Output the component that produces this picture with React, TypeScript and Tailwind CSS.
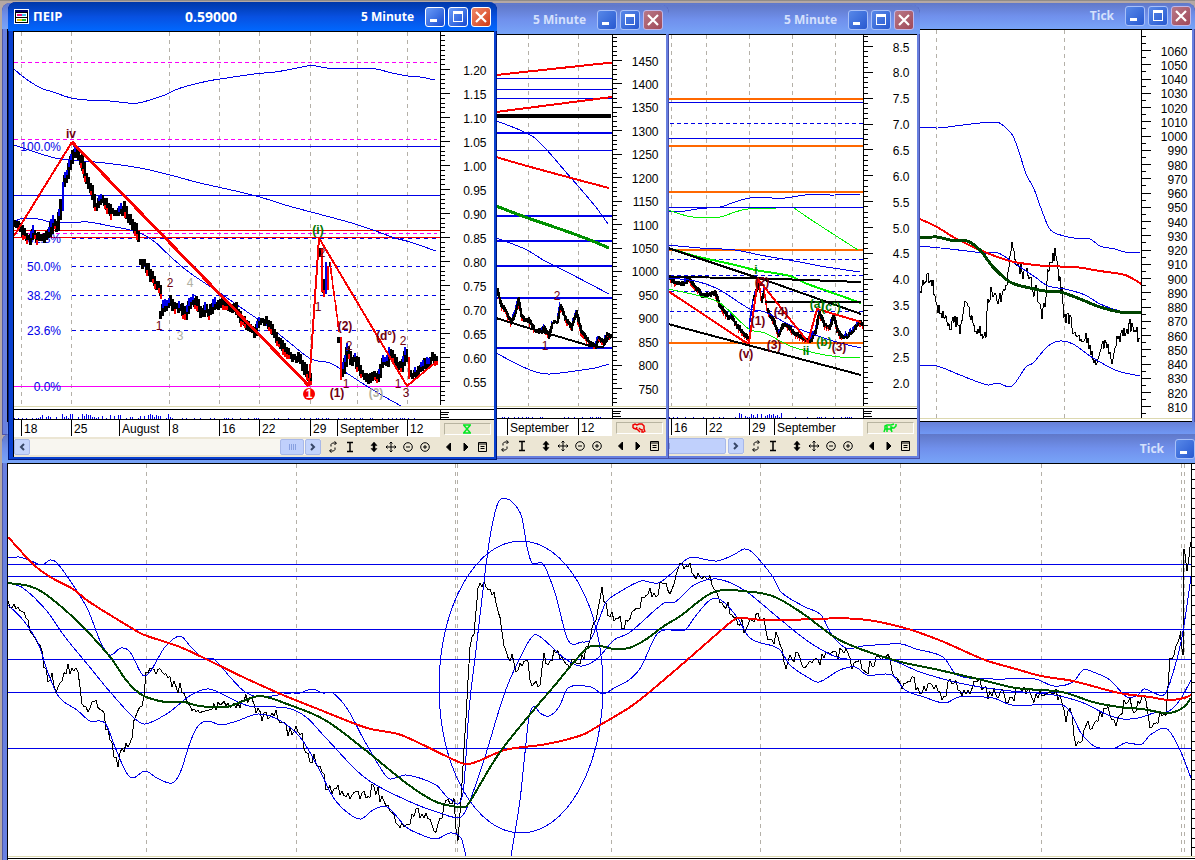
import type { ReactNode } from 'react'

type Point = [number, number]

const BLUE = '#0000e8'
const RED = '#f80000'
const ORANGE = '#ff6800'
const MAROON = '#700010'
const GREEN = '#007800'
const PINE = '#004400'

// "x,y x,y" -> [[x, y], ...]
const parse = (s: string): Point[] => s.trim().split(/\s+/).map((p) => p.split(',').map(Number) as Point)

const noise = (i: number) => {
  const n = Math.sin(i * 12.9898) * 43758.5453
  return n - Math.floor(n)
}

// height of the series at every whole x
const sample = (s: string) => {
  const pts = parse(s)
  const out: Point[] = []
  for (let i = 0; i < pts.length - 1; i++) {
    const [x0, y0] = pts[i]
    const [x1, y1] = pts[i + 1]
    for (let x = x0; x < x1; x++) out.push([x, y0 + ((y1 - y0) * (x - x0)) / (x1 - x0)])
  }
  out.push(pts[pts.length - 1])
  return out
}

// moving averages and bands
function Line({ d, color = BLUE, w = 1 }: { d: string; color?: string; w?: number }) {
  const p = parse(d)
  let path = `M${p[0][0]} ${p[0][1]}`
  for (let i = 0; i < p.length - 1; i++) {
    const a = p[i - 1] ?? p[i]
    const b = p[i]
    const c = p[i + 1]
    const e = p[i + 2] ?? c
    const third = (c[0] - b[0]) / 3
    const t1 = (c[1] - a[1]) / (c[0] - a[0])
    const t2 = (e[1] - b[1]) / (e[0] - b[0])
    path += `C${(b[0] + third).toFixed(1)} ${(b[1] + third * t1).toFixed(1)} ${(c[0] - third).toFixed(1)} ${(c[1] - third * t2).toFixed(1)} ${c[0]} ${c[1]}`
  }
  return <path d={path} fill="none" stroke={color} strokeWidth={w} />
}

// trend lines drawn by hand, corner to corner
function Trend({ d, color = RED, w = 2 }: { d: string; color?: string; w?: number }) {
  return <polyline points={d} fill="none" stroke={color} strokeWidth={w} strokeLinejoin="round" />
}

// tick by tick price
function TickLine({ d, amp = 5, every = 1 }: { d: string; amp?: number; every?: number }) {
  const pts = sample(d)
    .filter((_, i) => i % every === 0)
    .map(([x, y], i) => `${x},${(y + (noise(x + i) - 0.5) * 2 * amp).toFixed(1)}`)
  return <polyline points={pts.join(' ')} fill="none" stroke="#000" />
}

// high/low bars: black body, blue on the way up, red on the way down
function Bars({ d, amp = 5, wide = false }: { d: string; amp?: number; wide?: boolean }) {
  const pts = sample(d).filter((_, i) => !wide || i % 2 === 0)
  let black = ''
  let red = ''
  let blue = ''
  pts.forEach(([x, y], i) => {
    const prev = i ? pts[i - 1][1] : y
    const slope = (y - prev) / (wide ? 2 : 1)
    const j = (noise(x) - 0.5) * amp
    const a = amp * (0.6 + noise(x * 3) * 0.6)
    const top = Math.min(y, prev) + j - a
    const bottom = Math.max(y, prev) + j + a
    const seg = (from: number, to: number) => `M${x + 0.5} ${from.toFixed(1)}V${to.toFixed(1)}`
    if (Math.abs(slope) > 6) {
      if (slope > 0) red += seg(top, bottom)
      else blue += seg(top, bottom)
      return
    }
    black += seg(top, bottom)
    if (slope > 0.4 && noise(x * 7) > 0.5) red += seg(bottom - a * 0.5, bottom + a * 0.8)
    if (slope < -0.4 && noise(x * 5) > 0.45) blue += seg(top - a * 0.8, top + a)
  })
  return (
    <g fill="none">
      <path d={black} stroke="#000" strokeWidth={wide ? 3 : 2} />
      <path d={red} stroke={RED} strokeWidth={wide ? 2 : 1} />
      <path d={blue} stroke={BLUE} strokeWidth={wide ? 2 : 1} />
    </g>
  )
}

function Levels({ ys, x1, x2, color = BLUE, w = 1, dash }: { ys: number[]; x1: number; x2: number; color?: string; w?: number; dash?: string }) {
  return (
    <g stroke={color} strokeWidth={w} strokeDasharray={dash}>
      {ys.map((y) => (
        <line key={y} x1={x1} x2={x2} y1={y} y2={y} />
      ))}
    </g>
  )
}

function Grid({ xs, y1, y2 }: { xs: number[]; y1: number; y2: number }) {
  return (
    <g stroke="#b4b0a8" strokeDasharray="4 4">
      {xs.map((x) => (
        <line key={x} x1={x} x2={x} y1={y1} y2={y2} />
      ))}
    </g>
  )
}

interface AxisProps {
  x: number
  top: number
  bottom: number
  first: number
  step: number
  minor: number
  labels: string[]
}

function PriceAxis({ x, top, bottom, first, step, minor, labels }: AxisProps) {
  const gap = step / minor
  const start = first - Math.floor((first - top) / gap) * gap
  const small: number[] = []
  for (let y = start; y < bottom; y += gap) small.push(y)
  return (
    <g stroke="#000">
      <line x1={x} x2={x} y1={top} y2={bottom} />
      {small.map((y) => (
        <line key={y} x1={x} x2={x + 4} y1={y} y2={y} />
      ))}
      {labels.map((label, i) => (
        <g key={label}>
          <line x1={x} x2={x + 9} y1={first + i * step} y2={first + i * step} />
          <text x={x + 46} y={first + i * step + 5} textAnchor="end" stroke="none" fill="#000">
            {label}
          </text>
        </g>
      ))}
    </g>
  )
}

type Mark = [string, number, number, string, boolean?]

function Marks({ items }: { items: Mark[] }) {
  return (
    <g textAnchor="middle">
      {items.map(([text, x, y, color, bold], i) => (
        <text key={i} x={x} y={y} fill={color} fontWeight={bold ? 700 : 400}>
          {text}
        </text>
      ))}
    </g>
  )
}

function Chart({ box, className, children }: { box: string; className: string; children: ReactNode }) {
  return (
    <svg viewBox={box} preserveAspectRatio="none" shapeRendering="crispEdges" className={`block w-full bg-white text-[12px] ${className}`}>
      {children}
    </svg>
  )
}

const range = (from: number, to: number, step: number, digits = 0) => {
  const out: string[] = []
  const n = Math.round((to - from) / step)
  for (let i = 0; i <= n; i++) out.push((from + i * step).toFixed(digits))
  return out
}

/* ---------- window chrome ---------- */

function CaptionButton({ kind, active }: { kind: 'Minimize' | 'Maximize' | 'Close'; active: boolean }) {
  const blue = active ? 'bg-linear-to-br from-[#6c9cf8] to-[#1848d0] border-white' : 'bg-linear-to-br from-[#5888e8] to-[#2858d0] border-[#a8c0f8]'
  const red = active ? 'bg-linear-to-br from-[#f08868] to-[#d03810] border-white' : 'bg-linear-to-br from-[#b87888] to-[#a04858] border-[#c0b8e8]'
  return (
    <button aria-label={kind} className={`flex size-5 shrink-0 items-center justify-center rounded-[3px] border ${kind === 'Close' ? red : blue}`}>
      <svg width="14" height="14" viewBox="0 0 14 14" fill="none" stroke="#fff" shapeRendering={kind === 'Close' ? 'auto' : 'crispEdges'}>
        {kind === 'Minimize' && <path d="M2 10.5h7" strokeWidth="3" />}
        {kind === 'Maximize' && (
          <>
            <path d="M2.500 2v9.500h9V2" />
            <path d="M2 2.500h10" strokeWidth="3" />
          </>
        )}
        {kind === 'Close' && <path d="M2 2l10 10M12 2L2 12" strokeWidth="2.2" />}
      </svg>
    </button>
  )
}

interface WindowProps {
  className: string
  interval: string
  symbol?: string
  price?: string
  active?: boolean
  short?: boolean
  children: ReactNode
}

function Window({ className, interval, symbol, price, active = false, short, children }: WindowProps) {
  const frame = active ? 'bg-[#0840d0] shadow-[inset_1px_0_0_#001878,inset_-1px_-1px_0_#001878]' : 'bg-[#6880e0] shadow-[inset_1px_0_0_#5058a8,inset_-1px_-1px_0_#4850a8]'
  const bar = active
    ? 'bg-linear-to-b from-[#0038a8] via-[#0850e0] to-[#0068ff] text-white'
    : 'bg-linear-to-b from-[#6078c8] via-[#7090ec] to-[#78a4f8] text-[#d4e0fc]'
  return (
    <section className={`absolute flex flex-col overflow-hidden rounded-t-lg pr-[3px] pb-[3px] pl-[5px] ${frame} ${className}`}>
      <header
        className={`-mr-[3px] -ml-[5px] flex shrink-0 items-center gap-[3px] rounded-t-lg pl-[6px] font-['Open_Sans',sans-serif] text-[12px] font-bold ${bar} ${short ? 'h-[26px] pr-[4px]' : 'h-[29px] pr-[6px]'}`}
      >
        {symbol && (
          <div className="flex w-[168px] items-center gap-1">
            <svg width="15" height="15" viewBox="0 0 15 15" shapeRendering="crispEdges">
              <path d="M0 0h15v15H0z" fill="#fff" />
              <path d="M1 1h13v2H1z" fill="#000060" />
              <path d="M1 3h13v11H1z" fill="#000" />
              <path d="M2 4h11v4H2zM2 9h11v4H2z" fill="#fff" />
              <path d="M3 5h5v2H3z" fill="#f01080" />
              <path d="M8 5h4v2H8z" fill="#40c0f0" />
              <path d="M3 10h5v2H3z" fill="#e8c800" />
              <path d="M8 10h4v2H8z" fill="#20c020" />
            </svg>
            <span className="text-[13px]">{symbol}</span>
          </div>
        )}
        <span className="text-sm">{price}</span>
        <span className="mr-[8px] ml-auto">{interval}</span>
        <CaptionButton kind="Minimize" active={active} />
        <CaptionButton kind="Maximize" active={active} />
        <CaptionButton kind="Close" active={active} />
      </header>
      <div className="flex-1 border-t border-l border-black bg-white">{children}</div>
    </section>
  )
}

const toolIcons: [string, ReactNode][][] = [
  [
    ['Refresh', <path key="r" d="M9 2H5.500L4 3.500V5.500M7.500 .5L9.500 2L7.500 4M3 10H6.500L8 8.500V6.500M4.500 8L2.500 10L4.500 11.500" />],
    ['Cursor', <path key="c" d="M3 1.500h6M3 10.500h6M6 1.500v9" strokeWidth="1.500" />],
  ],
  [
    ['Scale', <path key="s" d="M6 1L9 4.500H7V7.500H9L6 11L3 7.500H5V4.500H3z" fill="#000" strokeWidth=".5" />],
    ['Move', <path key="m" d="M6 1v10M1 6h10M4.500 2.500L6 1L7.500 2.500M4.500 9.500L6 11L7.500 9.500M2.500 4.500L1 6L2.500 7.500M9.500 4.500L11 6L9.500 7.500" />],
    ['Zoom out', <path key="o" d="M10.300 6a4.300 4.300 0 1 1-8.600 0a4.300 4.300 0 1 1 8.600 0M4 6h4" />],
    ['Zoom in', <path key="i" d="M10.300 6a4.300 4.300 0 1 1-8.600 0a4.300 4.300 0 1 1 8.600 0M4 6h4M6 4v4" />],
  ],
  [
    ['Previous', <path key="p" d="M7.500 2v8L3.500 6z" fill="#000" />],
    ['Next', <path key="n" d="M4 2v8L8 6z" fill="#000" />],
    ['Properties', <path key="l" d="M1.500 1.500h8v9h-8zM1.500 3h8M3.500 5.500h4M3.500 7.500h4" />],
  ],
]

function Toolbar({ thumb, gap }: { thumb: string; gap: string }) {
  const arrow = 'flex h-4 w-4 shrink-0 items-center justify-center rounded-xs border border-[#a8b8e8] bg-[#c4d4fc]'
  return (
    <div className="flex h-5 items-center bg-[#ece6d4]">
      <div className="flex h-4 w-[307px] items-center bg-[#f8f6f0]">
        <button aria-label="Scroll left" className={arrow}>
          <svg width="8" height="8" fill="none" stroke="#384868" strokeWidth="2">
            <path d="M6 1L3 4L6 7" />
          </svg>
        </button>
        <div className={`ml-auto flex h-4 items-center justify-center gap-px rounded-xs border border-[#a8b8e8] bg-[#c0d0fc] ${thumb} ${gap}`}>
          <i className="h-1.5 w-px bg-[#88a0e0]" />
          <i className="h-1.5 w-px bg-[#88a0e0]" />
          <i className="h-1.5 w-px bg-[#88a0e0]" />
          <i className="h-1.5 w-px bg-[#88a0e0]" />
        </div>
        <button aria-label="Scroll right" className={arrow}>
          <svg width="8" height="8" fill="none" stroke="#384868" strokeWidth="2">
            <path d="M2 1L5 4L2 7" />
          </svg>
        </button>
      </div>
      <div className="ml-[3px] flex gap-[7px]">
        {toolIcons.map((group, i) => (
          <div key={i} className="flex">
            {group.map(([name, icon]) => (
              <button key={name} aria-label={name} className="flex h-5 w-[17px] items-center justify-center">
                <svg width="12" height="12" fill="none" stroke="#000">
                  {icon}
                </svg>
              </button>
            ))}
          </div>
        ))}
      </div>
    </div>
  )
}

interface FooterProps {
  lead: string
  dates: [string, string][]
  from: number
  bursts: number[]
  status: ReactNode
  thumb: string
  gap: string
}

// volume strip, date scale, status lamp and toolbar
function ChartFooter({ lead, dates, from, bursts, status, thumb, gap }: FooterProps) {
  let volume = ''
  for (let x = from; x < from + 422; x += 2) {
    const near = bursts.some((b) => Math.abs(b - x) < 22)
    const h = noise(x * 1.7) * (near ? 5 : 1.5)
    if (h > 1) volume += `M${x + 0.5} 9V${(9 - h).toFixed(1)}`
  }
  return (
    <>
      <div className="border-t border-black">
        <Chart box={`${from} 0 480 9`} className="h-[9px]">
          <path d={volume} stroke={BLUE} />
          <path d={`M${from + 426.5} 0v9M${from + 427} 2.500h8M${from + 427} 4.500h7M${from + 427} 7.500h8`} stroke="#000" />
        </Chart>
      </div>
      <div className="flex h-[18px] border-t border-black text-[12px] leading-[18px] text-black">
        <div className="flex flex-1 overflow-hidden">
          <div className={`shrink-0 ${lead}`} />
          {dates.map(([label, width]) => (
            <span key={label} className={`h-4 shrink-0 border-l border-black pl-[2px] ${width}`}>
              {label}
            </span>
          ))}
        </div>
        <div className="flex w-[54px] items-center justify-center bg-[#ece6d4]">
          <div className="flex h-[12px] w-[47px] items-center justify-center border border-[#b8b4a0] border-r-white border-b-white">{status}</div>
        </div>
      </div>
      <Toolbar thumb={thumb} gap={gap} />
    </>
  )
}

const Hourglass = () => (
  <svg width="10" height="10" fill="none" stroke="#00e820" strokeWidth="1.500">
    <path d="M1 1h8M1 9h8M2 1.500L8 8.500M8 1.500L2 8.500" />
  </svg>
)

const Bear = () => (
  <svg width="14" height="10" fill="none" stroke="#f00000" strokeWidth="1.500">
    <path d="M1 5V2L3 1L5 2L7 1H10L12 3V6L13 9M1 5L4 6L5 4M5 6L8 9M7 5L9 7M10 6V9H12" />
  </svg>
)

const Bull = () => (
  <svg width="14" height="10" fill="none" stroke="#00e820" strokeWidth="1.500">
    <path d="M13 1V3L11 5H9M11 1L8 2H4L2 3V6L1 9M4 3V9M2 6H8L9 9M8 3V6L10 4" />
  </svg>
)

/* ---------- charts ---------- */

function TickWindow() {
  return (
    <Window className="top-[3px] right-0 left-[2px] h-[432px]" interval="Tick" short>
      <Chart box="8 30 1184 391" className="h-[391px]">
        <Grid xs={[936.5, 1064.5]} y1={30} y2={418} />
        <TickLine d="920,290 924,284 928,277 933,285 936,300 939,310 944,315 949,328 955,318 961,330 965,305 969,310 974,325 977,330 980,327 983,338 986,334 988,300 992,290 998,297 1003,296 1006,290 1009,265 1012,238 1015,255 1020,268 1024,275 1028,272 1034,292 1037,292 1041,316 1045,300 1048,275 1052,262 1055,252 1058,270 1062,290 1064,320 1068,315 1075,335 1082,345 1086,340 1089,345 1093,360 1098,357 1105,340 1109,350 1113,363 1117,343 1123,333 1130,325 1136,332 1140,340" amp={7} />
        <Line d="920,127 938,128 955,126 985,122.5 998,122.5 1005,127 1013,136 1020,155 1026,174 1034,189 1042,211 1049,228 1055,233 1064,236 1074,238 1090,239 1100,246 1115,249 1125,252 1140,252" />
        <Line d="920,246 950,249 985,253 998,253 1010,260 1020,267 1035,277 1048,286 1065,289 1085,295 1100,304 1120,311 1141,314" />
        <Line d="920,365 937,366 960,375 988,385 998,383 1009,387 1015,383 1026,367 1033,363 1048,346 1060,341 1073,344 1090,356 1115,370 1125,373 1140,376" />
        <Line d="920,219 937,227 955,238 980,250 1010,261 1045,266 1075,267 1100,271 1125,275 1135,280 1141,284" color={RED} w={2} />
        <Line d="920,238 937,237 950,240 967,241 980,250 993,267 1010,282 1030,288 1045,291 1060,292 1075,297 1100,307 1120,312 1141,313" color={PINE} w={3} />
        <PriceAxis x={1141.5} top={30} bottom={418} first={50.5} step={14.25} minor={2} labels={range(1060, 810, -10)} />
        <Levels ys={[418.5]} x1={8} x2={1192} color="#dcd8b0" />
      </Chart>
      <div className="border-t border-black" />
      <div className="-mr-[3px] -ml-px h-3 bg-linear-to-b from-[#6880d8] to-[#7098f4]" />
    </Window>
  )
}

function BigTickWindow() {
  return (
    <Window className="top-[434px] -right-[52px] bottom-[-24px] left-[2px]" interval="Tick">
      <Chart box="8 464 1236 393" className="h-[393px]">
        <Grid xs={[146.5, 296.5, 455.5, 457.5, 611, 760, 900.5, 1041, 1181.5, 1184.5]} y1={464} y2={855} />
        <Levels ys={[564.5, 576.5, 629.5, 659.5, 692.5, 748.5]} x1={8} x2={1191} />
        <TickLine
          d="8,603 15,605 27,618 36,642 40,645 48,683 52,677 57,693 63,673 71,668 77,672 82,698 88,707 94,698 101,707 113,750 117,767 122,750 130,747 134,717 142,707 147,668 157,670 168,677 184,693 191,713 199,707 214,708 224,698 233,708 249,697 262,717 276,712 290,733 299,727 306,753 320,765 327,790 337,787 346,798 354,790 360,800 375,787 390,813 404,828 411,818 423,810 429,823 436,830 442,813 448,798 455,800 457,847 461,803 465,733 471,627 473,643 478,583 484,583 494,592 499,610 505,655 511,657 517,670 526,660 534,688 540,685 543,652 549,668 557,648 566,667 574,663 580,665 587,650 595,623 602,593 611,618 618,617 624,628 631,610 637,607 649,590 653,600 664,578 670,598 680,565 691,567 696,580 706,572 717,593 729,608 745,628 754,618 763,618 767,635 773,643 777,635 786,663 796,655 809,667 825,658 848,650 851,665 859,660 867,677 869,663 888,658 897,685 913,680 922,695 930,678 943,695 951,683 966,693 978,680 989,695 1001,692 1008,705 1020,688 1035,700 1050,688 1060,697 1066,717 1071,708 1075,740 1079,743 1089,725 1093,730 1100,715 1108,710 1115,723 1127,700 1135,710 1144,695 1150,723 1158,722 1163,708 1167,710 1169,660 1173,662 1180,633"
          amp={6}
          every={2}
        />
        <TickLine d="1180,633 1183,657 1184,547 1187,572 1191,540" amp={2} />
        <ellipse cx="521" cy="687" rx="82" ry="146" fill="none" stroke={BLUE} />
        <Line d="8,558 19,557 29,560 42,565 50,560 57,563 73,585 88,610 101,643 110,655 121,648 130,652 145,676 165,647 180,636 191,647 203,658 214,659 230,677 245,692 260,697 291,693 300,693 312,689 323,693 333,693 348,710 364,740 383,772 390,779 406,775 436,785 450,799 463,793 469,710 476,650 483,590 490,537 498,503 507,499 515,505 522,518 527,547 532,563 543,564 555,593 568,640 582,642 591,639 600,617 606,602 618,593 641,581 658,583 672,573 689,558 717,561 735,554 744,549 752,552 773,577 781,592 805,607 821,615 832,635 846,648 863,646 901,644 916,649 943,657 957,675 993,679 1035,679 1054,686 1073,682 1083,670 1093,672 1110,680 1127,697 1138,695 1144,689 1154,693 1165,694 1173,673 1182,637 1191,577" />
        <Line d="8,583 23,588 46,610 65,637 88,665 111,693 134,718 145,724 168,713 191,695 209,689 230,698 249,706 287,708 306,717 325,737 364,777 406,800 440,813 461,817 469,803 484,760 505,692 524,650 534,635 543,639 564,658 580,666 591,663 600,656 614,640 629,633 664,603 675,602 694,585 717,579 744,590 775,615 809,642 840,658 890,660 920,672 959,683 1001,690 1054,695 1081,702 1108,715 1123,719 1138,718 1154,713 1169,711 1180,700 1191,680" />
        <Line d="8,605 23,620 38,643 48,673 59,697 77,710 90,721 105,723 115,747 126,772 133,778 145,771 157,778 172,783 180,773 191,740 199,725 209,721 220,725 237,721 258,714 279,720 300,737 318,767 333,797 348,813 361,819 373,810 387,807 406,827 417,833 436,839 450,833 461,838 466,856" />
        <Line d="511,856 520,800 526,743 529,717 534,706 540,713 549,716 559,707 568,688 591,687 603,694 614,688 629,680 641,667 658,633 685,630 694,618 710,600 721,600 737,617 750,638 779,649 790,665 809,678 819,682 840,670 855,667 867,675 892,675 905,690 924,697 945,703 959,697 993,698 1012,705 1062,705 1071,713 1081,733 1096,747 1115,748 1125,743 1142,744 1150,735 1167,729 1180,750 1191,778" />
        <Line
          d="8,537 34,565 52,578 73,589 88,601 115,618 140,633 147,636 180,647 210,661 245,678 283,695 318,709 367,728 398,734 417,742 448,757 465,764 476,762 505,750 547,744 582,735 600,725 633,705 672,673 710,640 735,619 742,618 763,620 794,620 809,619 859,619 901,627 939,640 985,660 1016,669 1041,676 1073,681 1119,693 1150,697 1169,700 1184,698 1191,695"
          color={RED}
          w={2}
        />
        <Line
          d="8,583 29,586 44,593 77,621 111,658 126,680 142,695 165,702 184,702 199,706 226,707 241,702 260,696 287,704 325,720 364,749 406,783 432,800 446,805 465,807 469,803 498,755 532,712 555,685 574,662 589,647 600,646 614,649 629,648 645,640 664,626 679,617 714,592 752,592 775,597 802,613 836,638 863,650 901,662 939,670 978,679 1016,688 1062,692 1093,702 1119,707 1142,709 1169,713 1184,707 1191,698"
          color={PINE}
          w={2}
        />
        <PriceAxis x={1191.5} top={464} bottom={856} first={469.5} step={9.7} minor={1} labels={[]} />
        <Levels ys={[856.5]} x1={8} x2={1244} color="#dcd8b0" />
      </Chart>
      <div className="mt-px border-t border-black" />
    </Window>
  )
}

function MarketWindow() {
  return (
    <Window className="top-[5px] left-[431px] w-[489px]" interval="5 Minute">
      <Chart box="437 35 480 373" className="h-[373px]">
        <Grid xs={[671.5, 706.5, 749.5, 792.5, 835.5]} y1={35} y2={406} />
        <Levels ys={[99, 146, 192, 250, 343]} x1={660} x2={863} color={ORANGE} w={2} />
        <Levels ys={[102.5, 138.5, 207.5]} x1={660} x2={863} />
        <Levels ys={[123.5, 259.5, 275.5, 291.5, 311.5]} x1={670} x2={863} dash="4 3" />
        <Line d="668,212 685,211 700,208.5 720,207 735,202 750,198 785,198 805,195 835,195 848,194 860,195" />
        <Line d="668,210 680,214 693,217 720,217 735,212 748,209 776,209" color="#00f000" />
        <Line d="794,208 810,219 830,232 858,250" color="#00f000" />
        <Line d="668,245 700,248 735,250 760,255 800,262 820,266 860,272" />
        <Line d="675,250 695,256 735,265 755,270 790,276 805,283 830,292 861,303" color="#00f000" w={2} />
        <Bars d="668,278 675,283 682,284 688,279 692,285 697,290 701,296 708,294 714,293 718,304 724,313 727,318 730,316 735,325 742,333 748,340 749,320 752,300 758,282 760,300 763,290 766,310 772,320 777,335 782,325 784,325 790,330 797,336 805,340 809,340 814,332 818,312 823,325 828,328 832,316 836,330 841,338 847,335 852,330 858,322 862,325" amp={2} />
        <Line d="668,278 695,281 718,289 750,309 765,312 790,325 815,335 840,343 861,348" />
        <Line d="668,289 700,296 720,303 749,329 765,333 790,346 815,353 840,357 860,357" color="#00f000" />
        <Trend d="668,248 755,277 765,280 861,314" color="#000" />
        <Trend d="668,277 750,278 861,282" color="#000" />
        <Trend d="765,302 861,302" color="#000" />
        <Trend d="668,324 861,375" color="#000" />
        <Trend d="668,291 745,342 749,343 758,279 808,342 817,309 861,322" />
        <Marks
          items={[
            ['(v)', 746, 358, MAROON, true],
            ['(1)', 758, 325, MAROON, true],
            ['(2)', 762, 286, MAROON, true],
            ['(3)', 774, 349, MAROON, true],
            ['(4)', 781, 316, MAROON, true],
            ['i', 756, 274, GREEN, true],
            ['ii', 806, 355, GREEN, true],
            ['(a)', 817, 308, GREEN, true],
            ['(c°)', 831, 311, GREEN, true],
            ['(b)', 824, 346, GREEN, true],
            ['(3)', 839, 351, MAROON, true],
          ]}
        />
        <PriceAxis x={863.5} top={35} bottom={406} first={46.5} step={25.86} minor={5} labels={range(8.5, 2, -0.5, 1)} />
        <Levels ys={[406.5]} x1={437} x2={917} color="#dcd8b0" />
      </Chart>
      <ChartFooter
        lead="w-[234px]"
        dates={[
          ['16', 'w-[35px]'],
          ['22', 'w-[43px]'],
          ['29', 'w-[25px]'],
          ['September', 'w-[89px]'],
        ]}
        from={437}
        bursts={[760]}
        status={<Bull />}
        thumb="w-[120px]"
        gap="mr-[2px]"
      />
    </Window>
  )
}

function IndexWindow() {
  return (
    <Window className="top-[5px] left-[180px] w-[489px]" interval="5 Minute">
      <Chart box="186 35 480 373" className="h-[373px]">
        <Grid xs={[528.5, 578.5]} y1={35} y2={406} />
        <Levels ys={[78.5, 89.5, 98.5, 150.5]} x1={490} x2={612} />
        <Levels ys={[133, 216, 241, 266, 298, 348]} x1={490} x2={612} w={2} />
        <Levels ys={[116]} x1={490} x2={611} color="#000" w={4} />
        <Trend d="496,75 612,62.5" />
        <Trend d="496,112 612,97" />
        <Line d="496,121 510,126 532,136 545,148 565,171 595,206 608,224" />
        <Line d="496,157 520,164 560,175 609,188" color={RED} w={2} />
        <Line d="496,206 525,217 560,229 590,240 609,248" color="#009000" w={3} />
        <Line d="496,238 525,249 545,261 565,271 590,284 609,294" />
        <Line d="496,353 515,363 530,370 540,373 550,374 575,371 595,368 609,364" />
        <Bars d="496,290 500,305 505,312 510,322 514,312 517,300 520,315 523,320 528,320 533,330 540,332 543,328 548,336 551,322 556,322 559,305 564,318 570,328 575,312 580,332 588,342 594,346 597,338 602,342 606,335 610,337" amp={2} />
        <Trend d="496,318 525,327 560,337 590,346 603,347 608,339" color="#000" />
        <Marks
          items={[
            ['2', 557, 300, MAROON],
            ['1', 545, 350, MAROON],
          ]}
        />
        <PriceAxis x={612.5} top={35} bottom={406} first={60.5} step={23.44} minor={5} labels={range(1450, 750, -50)} />
        <Levels ys={[406.5]} x1={186} x2={666} color="#dcd8b0" />
      </Chart>
      <ChartFooter
        lead="w-[321px]"
        dates={[
          ['September', 'w-[71px]'],
          ['12', 'w-[34px]'],
        ]}
        from={186}
        bursts={[]}
        status={<Bear />}
        thumb="w-[24px]"
        gap="mr-px"
      />
    </Window>
  )
}

function PirWindow() {
  return (
    <Window className="top-[2px] left-[8px] w-[489px]" interval="5 Minute" symbol="ΠΕΙΡ" price="0.59000" active>
      <Chart box="14 32 480 377" className="h-[377px]">
        <Grid xs={[21.5, 71.5, 169.5, 219.5, 259.5, 310.5, 357.5, 407.5]} y1={32} y2={405} />
        <Levels ys={[62.5, 139.5, 233.5]} x1={14} x2={437} color="#f800f8" dash="4 3" />
        <Levels ys={[386.5]} x1={14} x2={440} color="#f800f8" />
        <Levels ys={[146.5]} x1={73} x2={440} />
        <Levels ys={[195.5]} x1={14} x2={440} />
        <Levels ys={[238.5, 266.5, 295.5, 330.5]} x1={72} x2={440} dash="4 4" />
        <Levels ys={[230.5, 237.5]} x1={14} x2={440} color={RED} />
        <g fill={BLUE} textAnchor="end">
          <text x="61" y="151">100.0%</text>
          <text x="61" y="243">61.8%</text>
          <text x="61" y="271">50.0%</text>
          <text x="61" y="300">38.2%</text>
          <text x="61" y="335">23.6%</text>
          <text x="61" y="391">0.0%</text>
        </g>
        <Line d="14,69 22,76 32,83 42,88.5 53,92 71,98 87,100 110,101 128,103 138,103 150,100 165,95 175,90 187,86 208,81 220,79 240,76 258,73.5 275,72 290,69.5 311,65.5 321,67 336,69 345,68 351,69 362,68 376,69 392,73 408,76 420,77 435,80" />
        <Line d="14,145 32,151 55,158 72,160 105,163 140,168 170,175 200,183 240,192 260,197 285,205 311,212 330,217 355,224 373,230 395,238 410,242 436,251" />
        <Line d="14,222 20,219 38,219 50,222 62,223 88,222 110,226 130,230 142,234 155,242 172,258 190,273 220,293 240,307 262,322 275,331 290,343 311,359 330,363 345,372 365,385 385,397 401,406" />
        <Bars d="14,222 18,225 23,234 27,240 32,234 40,238 47,236 52,222 56,228 60,205 62,185 66,175 70,160 74,153 80,160 85,180 90,188 95,208 100,200 104,203 110,213 117,213 122,208 126,215 132,225 136,233 139,240" wide amp={4} />
        <Bars d="140,262 146,267 151,278 156,285 160,290" wide amp={4} />
        <Bars d="160,313 163,308 170,301 173,308 180,305 183,316 187,308 191,299 195,302 200,314 204,308 208,312 213,304 220,303 228,307 234,308 240,318 246,325 254,331 259,320 264,321 270,327 276,340 284,350 290,356 298,358 304,370 309,378 311,380" wide amp={4} />
        <Bars d="319,250 321,285 323,288 325,270 327,283" wide amp={6} />
        <Bars d="329,263 335,308 338,330" amp={3} />
        <Bars d="338,340 339,376 343,368 347,345 349,362 354,358 360,373 366,378 372,374 377,379 379,366 386,362 389,352 393,360 400,368 405,352 408,374 412,375 420,368 428,362 432,357 437,360" wide amp={4} />
        <Trend d="14,236 72,142" />
        <Trend d="72,142 309,386" w={3} />
        <Trend d="309,386 319,238" />
        <Trend d="319,238 407,386 436,362" />
        <circle cx="309" cy="394" r="6" fill={RED} shapeRendering="auto" />
        <Marks
          items={[
            ['iv', 71, 138, MAROON, true],
            ['(i)', 318, 234, GREEN, true],
            ['2', 322, 257, MAROON],
            ['1', 318, 311, MAROON],
            ['1', 309, 398, '#fff', true],
            ['2', 170, 287, MAROON],
            ['1', 159, 330, MAROON],
            ['4', 190, 287, '#b0b0a0'],
            ['3', 180, 340, '#b0b0a0'],
            ['(2)', 345, 330, MAROON, true],
            ['2', 349, 350, MAROON],
            ['1', 346, 388, MAROON],
            ['(1)', 337, 397, MAROON, true],
            ['(3)', 376, 397, '#b0b0a0', true],
            ['(d°)', 386, 340, MAROON, true],
            ['1', 398, 388, MAROON],
            ['2', 403, 345, MAROON],
            ['3', 406, 397, MAROON],
          ]}
        />
        <PriceAxis x={440.5} top={32} bottom={405} first={69.5} step={24} minor={5} labels={range(1.2, 0.55, -0.05, 2)} />
        <Levels ys={[406.5]} x1={14} x2={494} color="#dcd8b0" />
      </Chart>
      <ChartFooter
        lead="w-[7px]"
        dates={[
          ['18', 'w-[50px]'],
          ['25', 'w-[48px]'],
          ['August', 'w-[50px]'],
          ['8', 'w-[50px]'],
          ['16', 'w-[40px]'],
          ['22', 'w-[51px]'],
          ['29', 'w-[27px]'],
          ['September', 'w-[70px]'],
          ['12', 'w-[33px]'],
        ]}
        from={14}
        bursts={[60, 100, 150]}
        status={<Hourglass />}
        thumb="w-[24px]"
        gap="mr-px"
      />
    </Window>
  )
}

export default function App() {
  return (
    <main className="relative h-screen w-full overflow-hidden border-t border-[#908c88] bg-[#b4a8a4] font-['Liberation_Sans',Arial,sans-serif]">
      <div className="absolute inset-0 -top-px">
        <TickWindow />
        <BigTickWindow />
        <MarketWindow />
        <IndexWindow />
        <PirWindow />
      </div>
    </main>
  )
}
